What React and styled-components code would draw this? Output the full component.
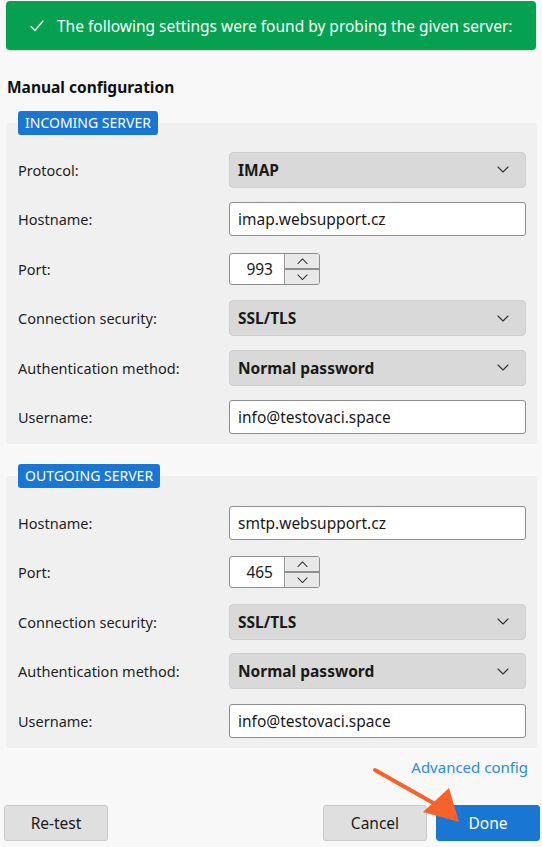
import React from 'react';
import styled, { createGlobalStyle } from 'styled-components';

const GlobalStyle = createGlobalStyle`
  html, body {
    margin: 0;
    padding: 0;
    background: #f8f8f8;
  }
  body {
    font-family: "Noto Sans", "Open Sans", sans-serif;
    color: #1b1b1b;
  }
`;

const incoming = [
  { label: 'Protocol:', type: 'select', value: 'IMAP' },
  { label: 'Hostname:', type: 'text', value: 'imap.websupport.cz' },
  { label: 'Port:', type: 'port', value: '993' },
  { label: 'Connection security:', type: 'select', value: 'SSL/TLS' },
  { label: 'Authentication method:', type: 'select', value: 'Normal password' },
  { label: 'Username:', type: 'text', value: 'info@testovaci.space' },
];

const outgoing = [
  { label: 'Hostname:', type: 'text', value: 'smtp.websupport.cz' },
  { label: 'Port:', type: 'port', value: '465' },
  { label: 'Connection security:', type: 'select', value: 'SSL/TLS' },
  { label: 'Authentication method:', type: 'select', value: 'Normal password' },
  { label: 'Username:', type: 'text', value: 'info@testovaci.space' },
];

const Chevron = ({ up, size = 12 }) => (
  <svg width={size} height={size / 2 + 1} viewBox="0 0 12 7" fill="none">
    <path
      d={up ? 'M1 6L6 1L11 6' : 'M1 1L6 6L11 1'}
      stroke="#333"
      strokeWidth="1.1"
      strokeLinecap="round"
      strokeLinejoin="round"
    />
  </svg>
);

function Field({ item }) {
  if (item.type === 'select') {
    return (
      <Select>
        <span>{item.value}</span>
        <Chevron />
      </Select>
    );
  }
  if (item.type === 'port') {
    return (
      <Spinner>
        <SpinValue>{item.value}</SpinValue>
        <SpinButtons>
          <SpinButton><Chevron up size={11} /></SpinButton>
          <SpinButton><Chevron size={11} /></SpinButton>
        </SpinButtons>
      </Spinner>
    );
  }
  return <TextBox>{item.value}</TextBox>;
}

function Section({ title, items, first }) {
  return (
    <SectionWrap first={first}>
      <Badge>{title}</Badge>
      <Box>
        {items.map((item, i) => (
          <Row key={i}>
            <Label>{item.label}</Label>
            <Field item={item} />
          </Row>
        ))}
      </Box>
    </SectionWrap>
  );
}

export default function App() {
  return (
    <Page>
      <GlobalStyle />
      <Banner>
        <svg width="14" height="12" viewBox="0 0 14 12" fill="none">
          <path d="M1 6.5L5 10.5L13 1" stroke="#fff" strokeWidth="1.3" strokeLinecap="round" strokeLinejoin="round" />
        </svg>
        <span>The following settings were found by probing the given server:</span>
      </Banner>

      <Heading>Manual configuration</Heading>

      <Section title="INCOMING SERVER" items={incoming} first />
      <Section title="OUTGOING SERVER" items={outgoing} />

      <LinkRow>
        <AdvancedLink href="#">Advanced config</AdvancedLink>
      </LinkRow>

      <Footer>
        <Button>Re-test</Button>
        <Spacer />
        <Button>Cancel</Button>
        <Button primary>Done</Button>
        <Arrow width="100" height="60" viewBox="0 0 100 60">
          <line x1="4" y1="4" x2="64" y2="38" stroke="#f5622a" strokeWidth="4" strokeLinecap="round" />
          <polygon points="52,46 78,22 88,56" fill="#f5622a" />
        </Arrow>
      </Footer>
    </Page>
  );
}

const Page = styled.div`
  width: 542px;
  height: 847px;
  padding-top: 1px;
  box-sizing: border-box;
  position: relative;
  overflow: hidden;
`;

const Banner = styled.div`
  margin: 0 6px;
  height: 49px;
  background: #05a150;
  border-radius: 4px;
  display: flex;
  align-items: center;
  gap: 13px;
  padding-left: 24px;
  color: #fff;
  font-size: 15.5px;
  white-space: nowrap;
  overflow: hidden;
  box-shadow: 0 1px 2px rgba(0, 0, 0, 0.15);

  svg {
    flex: none;
  }
`;

const Heading = styled.div`
  margin: 25px 0 0 7px;
  height: 24px;
  line-height: 24px;
  font-size: 15.5px;
  font-weight: 700;
  color: #111;
`;

const SectionWrap = styled.div`
  margin: ${(p) => (p.first ? '12px' : '20px')} 5px 0 6px;
`;

const Badge = styled.div`
  position: relative;
  z-index: 1;
  display: inline-block;
  margin-left: 12px;
  height: 24px;
  line-height: 24px;
  padding: 0 7px;
  background: #1976d2;
  color: #fff;
  font-size: 14px;
  border-radius: 3px;
`;

const Box = styled.div`
  margin-top: -12px;
  padding: 22px 0 2px 12px;
  background: #f0f0f0;
  border-radius: 4px;
`;

const Row = styled.div`
  height: 49.5px;
  display: flex;
  align-items: center;
`;

const Label = styled.div`
  width: 211px;
  font-size: 14.5px;
  color: #1f1f1f;
`;

const Select = styled.div`
  width: 297px;
  height: 36px;
  box-sizing: border-box;
  background: #d9d9d9;
  border: 1px solid #cfcfcf;
  border-radius: 4px;
  display: flex;
  align-items: center;
  justify-content: space-between;
  padding: 0 16px 0 8px;
  font-size: 15.5px;
  font-weight: 700;
  color: #1a1a1a;
`;

const TextBox = styled.div`
  width: 297px;
  height: 34px;
  box-sizing: border-box;
  background: #fff;
  border: 1px solid #8d8d8d;
  border-radius: 3px;
  display: flex;
  align-items: center;
  padding: 0 8px;
  font-size: 15.5px;
  color: #1a1a1a;
`;

const Spinner = styled.div`
  width: 91px;
  height: 32px;
  box-sizing: border-box;
  border: 1px solid #8d8d8d;
  border-radius: 3px;
  background: #fff;
  display: flex;
  overflow: hidden;
`;

const SpinValue = styled.div`
  flex: 1;
  display: flex;
  align-items: center;
  justify-content: flex-end;
  padding-right: 11px;
  font-size: 15.5px;
`;

const SpinButtons = styled.div`
  width: 34px;
  display: flex;
  flex-direction: column;
  border-left: 1px solid #9a9a9a;
`;

const SpinButton = styled.div`
  flex: 1;
  background: #e8e8e8;
  display: flex;
  align-items: center;
  justify-content: center;

  & + & {
    border-top: 2px solid #8d8d8d;
  }
`;

const LinkRow = styled.div`
  display: flex;
  justify-content: flex-end;
  margin-top: 8px;
  padding-right: 14px;
`;

const AdvancedLink = styled.a`
  font-size: 15px;
  color: #2b8ae6;
  text-decoration: none;
  line-height: 22px;
`;

const Footer = styled.div`
  position: relative;
  margin-top: 27px;
  padding: 0 2px 0 4px;
  display: flex;
  gap: 9px;
`;

const Spacer = styled.div`
  flex: 1;
`;

const Button = styled.div`
  width: 104px;
  height: 36px;
  box-sizing: border-box;
  border-radius: 3px;
  display: flex;
  align-items: center;
  justify-content: center;
  font-size: 15.5px;
  background: ${(p) => (p.primary ? '#1976d2' : '#dfdfdf')};
  color: ${(p) => (p.primary ? '#fff' : '#1a1a1a')};
  border: 1px solid ${(p) => (p.primary ? '#1976d2' : '#c9c9c9')};
`;

const Arrow = styled.svg`
  position: absolute;
  left: 371px;
  top: -39px;
  pointer-events: none;
`;
